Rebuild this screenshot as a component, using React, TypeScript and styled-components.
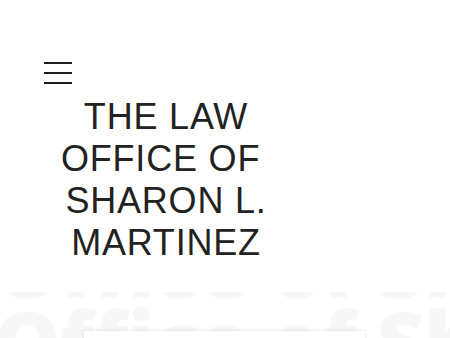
import React from "react";
import styled, { createGlobalStyle } from "styled-components";

const Global = createGlobalStyle`
  html, body { margin: 0; padding: 0; background: #ffffff; }
  body { font-family: "Liberation Sans", Arial, sans-serif; overflow: hidden; }
`;

const Page = styled.div`
  width: 450px;
  height: 338px;
  overflow: hidden;
  display: flex;
  flex-direction: column;
`;

const Header = styled.header`
  padding: 62px 0 0 44px;
  display: flex;
  flex-direction: column;
  align-items: flex-start;
`;

const Burger = styled.button`
  width: 28px;
  height: 22px;
  padding: 0;
  border: 0;
  background: transparent;
  display: flex;
  flex-direction: column;
  justify-content: space-between;
  cursor: pointer;
`;

const BurgerLine = styled.span`
  display: block;
  width: 28px;
  height: 2px;
  background: #1e1e1e;
`;

const Title = styled.h1`
  margin: 12px 0 0 0;
  width: 244px;
  text-align: center;
  font-family: "Liberation Sans", Arial, sans-serif;
  font-weight: 400;
  font-size: 36px;
  line-height: 42px;
  letter-spacing: 0.8px;
  color: #222222;
  text-transform: uppercase;
`;

const Band = styled.section`
  margin-top: 28px;
  position: relative;
  flex: 1;
  background: #ffffff;
  overflow: hidden;
`;

const Watermark = styled.div`
  font-family: "Open Sans", "Liberation Sans", sans-serif;
  font-weight: 800;
  font-size: 84px;
  line-height: 74px;
  color: #f7f7f7;
  white-space: nowrap;
  margin-top: -63px;
  margin-left: -6px;
  letter-spacing: -1px;
`;

const Card = styled.div`
  position: absolute;
  left: 84px;
  top: 39px;
  width: 281px;
  height: 80px;
  background: #ffffff;
  box-shadow: 0 0 4px rgba(0, 0, 0, 0.12);
`;

export default function App() {
  return (
    <>
      <Global />
      <Page>
        <Header>
          <Burger aria-label="Menu">
            <BurgerLine />
            <BurgerLine />
            <BurgerLine />
          </Burger>
          <Title>
            The Law
            <br />
            Office of{"\u00a0"}
            <br />
            Sharon L.
            <br />
            Martinez
          </Title>
        </Header>
        <Band>
          <Watermark>
            Office of Sharon
            <br />
            Office of Sharon
          </Watermark>
          <Card />
        </Band>
      </Page>
    </>
  );
}
